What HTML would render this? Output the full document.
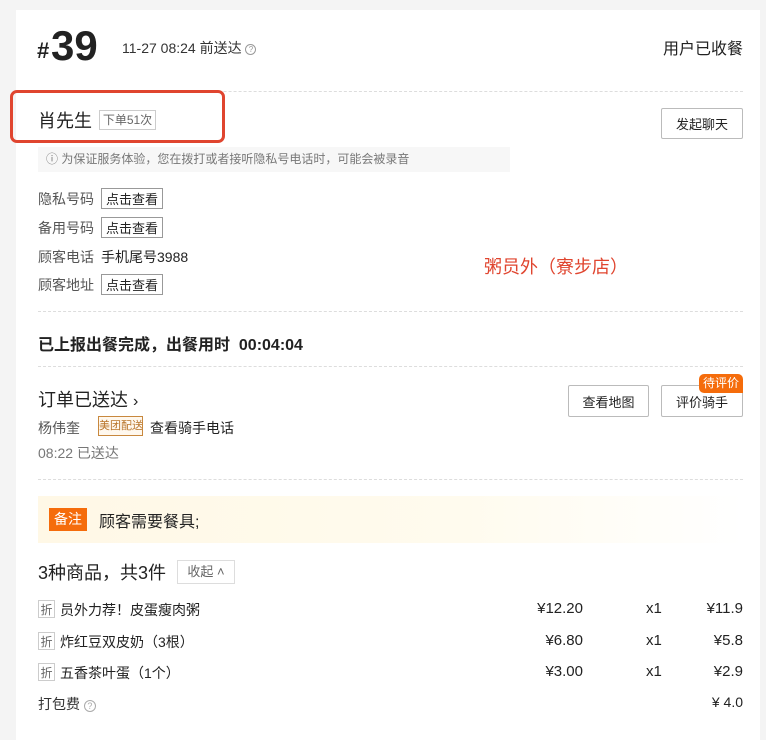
<!DOCTYPE html>
<html><head><meta charset="utf-8"><style>
*{margin:0;padding:0;box-sizing:border-box}
body{width:766px;height:724px;background:#f4f4f4;font-family:"Liberation Sans","Noto Sans CJK SC",sans-serif;color:#222;position:relative;overflow:hidden}
.card{position:absolute;left:16px;top:10px;width:744px;height:730px;background:#fff}
.a{position:absolute;white-space:nowrap}
.dash{position:absolute;left:38px;width:705px;border-top:1px dashed #ddd;height:0}
.btn{position:absolute;border:1px solid #bbb;border-radius:2px;background:#fff;font-size:13px;display:flex;align-items:center;justify-content:center;color:#222}
.sb{position:absolute;left:101px;width:62px;height:21px;border:1px solid #999;font-size:13px;display:flex;align-items:center;justify-content:center;color:#222}
.lbl{position:absolute;left:38px;font-size:14px;color:#555}
.zhe{position:absolute;left:38px;width:17px;height:18px;border:1px solid #ccc;font-size:12px;color:#666;display:flex;align-items:center;justify-content:center}
.it{position:absolute;left:60px;font-size:14px;color:#222}
.pr{position:absolute;font-size:15px;color:#222;text-align:right}
</style></head><body>
<div class="card"></div>
<div class="a" style="left:37px;top:38px;font-size:22px;font-weight:bold">#</div>
<div class="a" style="left:51px;top:22px;font-size:42px;font-weight:bold;line-height:48px">39</div>
<div class="a" style="left:122px;top:38px;font-size:14px;color:#333">11-27 08:24 前送达 <span style="display:inline-block;width:11px;height:11px;border:1px solid #999;border-radius:50%;font-size:8px;line-height:9px;text-align:center;color:#999;vertical-align:1px">?</span></div>
<div class="a" style="right:23px;top:35px;font-size:16px;color:#222">用户已收餐</div>
<div class="dash" style="top:91px"></div>
<div class="a" style="left:10px;top:90px;width:215px;height:53px;border:3px solid #e0452f;border-radius:7px"></div>
<div class="a" style="left:38px;top:107px;font-size:18px;color:#222">肖先生</div>
<div class="a" style="left:99px;top:110px;width:57px;height:20px;border:1px solid #ccc;font-size:12px;color:#666;text-align:center;line-height:18px">下单51次</div>
<div class="btn" style="left:661px;top:108px;width:82px;height:31px">发起聊天</div>
<div class="a" style="left:38px;top:147px;width:472px;height:25px;background:#f7f7f7;font-size:12px;color:#777;line-height:25px;padding-left:8px">ⓘ 为保证服务体验，您在拨打或者接听隐私号电话时，可能会被录音</div>
<div class="lbl" style="top:189px">隐私号码</div><div class="sb" style="top:188px">点击查看</div>
<div class="lbl" style="top:218px">备用号码</div><div class="sb" style="top:217px">点击查看</div>
<div class="lbl" style="top:247px">顾客电话</div><div class="a" style="left:101px;top:247px;font-size:14px;color:#222">手机尾号3988</div>
<div class="lbl" style="top:275px">顾客地址</div><div class="sb" style="top:274px">点击查看</div>
<div class="a" style="left:484px;top:253px;font-size:18px;color:#e0452f">粥员外（寮步店）</div>
<div class="dash" style="top:311px"></div>
<div class="a" style="left:38px;top:331px;font-size:16px;font-weight:bold">已上报出餐完成，出餐用时&nbsp; 00:04:04</div>
<div class="dash" style="top:366px"></div>
<div class="a" style="left:38px;top:386px;font-size:18px">订单已送达 <span style="font-size:16px">›</span></div>
<div class="btn" style="left:568px;top:385px;width:81px;height:32px">查看地图</div>
<div class="btn" style="left:661px;top:385px;width:82px;height:32px">评价骑手</div>
<div class="a" style="left:699px;top:374px;width:44px;height:19px;background:#f56c0b;color:#fff;font-size:12px;text-align:center;line-height:19px;border-radius:5px 5px 0 5px">待评价</div>
<div class="a" style="left:38px;top:418px;font-size:14px;color:#555">杨伟奎</div>
<div class="a" style="left:98px;top:416px;width:45px;height:20px;border:1px solid #c8883e;color:#b8742a;font-size:11px;text-align:center;line-height:18px;background:#fff8ee;overflow:hidden">美团配送</div>
<div class="a" style="left:150px;top:418px;font-size:14px;color:#222">查看骑手电话</div>
<div class="a" style="left:38px;top:443px;font-size:14px;color:#777">08:22 已送达</div>
<div class="dash" style="top:479px"></div>
<div class="a" style="left:38px;top:496px;width:705px;height:47px;background:linear-gradient(90deg,#fff8e6,#fffbee 60%,#fff)"></div>
<div class="a" style="left:49px;top:508px;width:38px;height:23px;background:#f56c0b;color:#fff;font-size:14px;text-align:center;line-height:23px">备注</div>
<div class="a" style="left:99px;top:508px;font-size:16px">顾客需要餐具;</div>
<div class="a" style="left:38px;top:559px;font-size:18px">3种商品，共3件</div>
<div class="a" style="left:177px;top:560px;width:58px;height:24px;border:1px solid #ddd;font-size:13px;color:#666;text-align:center;line-height:22px">收起 ˄</div>
<div class="zhe" style="top:600px">折</div><div class="it" style="top:600px">员外力荐！皮蛋瘦肉粥</div>
<div class="zhe" style="top:632px">折</div><div class="it" style="top:632px">炸红豆双皮奶（3根）</div>
<div class="zhe" style="top:663px">折</div><div class="it" style="top:663px">五香茶叶蛋（1个）</div>
<div class="pr" style="right:183px;top:600px">¥12.20</div><div class="pr" style="left:646px;top:600px">x1</div><div class="pr" style="right:23px;top:600px">¥11.9</div>
<div class="pr" style="right:183px;top:632px">¥6.80</div><div class="pr" style="left:646px;top:632px">x1</div><div class="pr" style="right:23px;top:632px">¥5.8</div>
<div class="pr" style="right:183px;top:663px">¥3.00</div><div class="pr" style="left:646px;top:663px">x1</div><div class="pr" style="right:23px;top:663px">¥2.9</div>
<div class="a" style="left:38px;top:694px;font-size:14px;color:#333">打包费 <span style="display:inline-block;width:12px;height:12px;border:1px solid #aaa;border-radius:50%;font-size:9px;line-height:10px;text-align:center;color:#aaa">?</span></div>
<div class="pr" style="right:23px;top:694px;font-size:14px">¥ 4.0</div>
</body></html>
